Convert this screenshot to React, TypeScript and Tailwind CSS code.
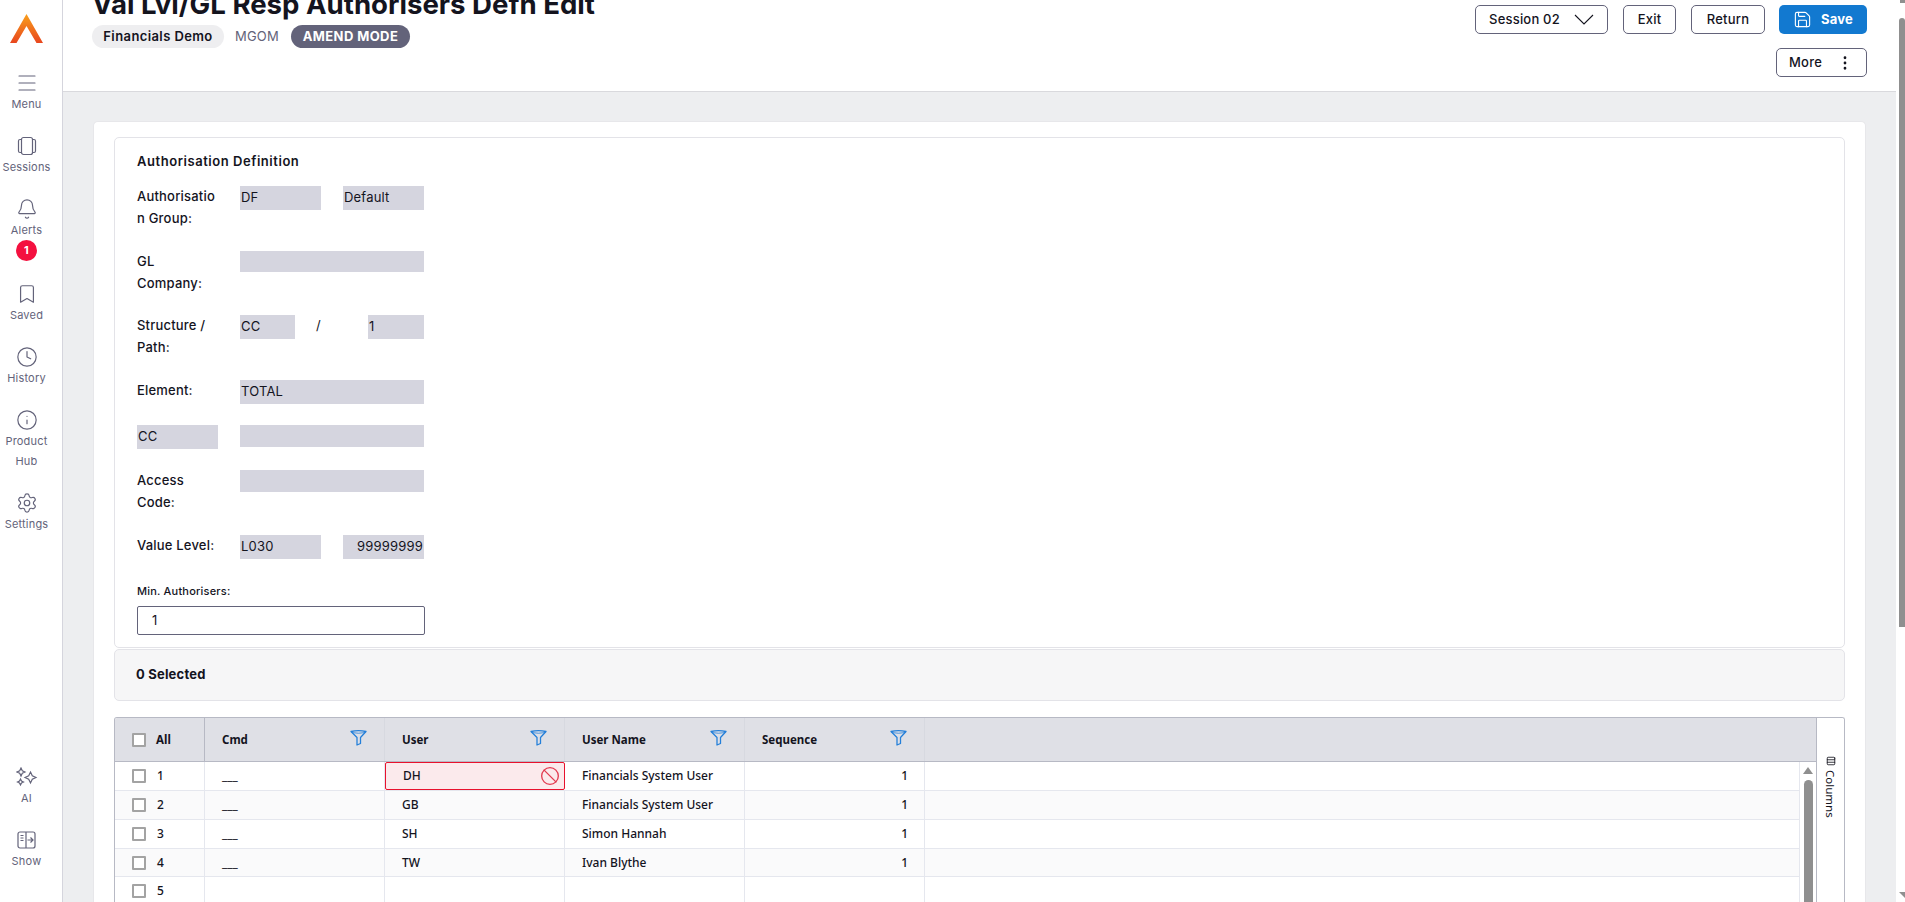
import React from "react";
import {
  Menu,
  Bell,
  Bookmark,
  Clock,
  Info,
  Settings,
  Save,
  EllipsisVertical,
  Ban,
  Columns3,
} from "lucide-react";

const montserrat = "font-['Inter','Liberation_Sans',sans-serif] tracking-[0.2px]";

function SessionsIcon() {
  return (
    <svg width="20" height="20" viewBox="0 0 20 20" fill="none" stroke="#63637a" strokeWidth="1.2">
      <rect x="4.5" y="1.5" width="11" height="17" rx="2" />
      <path d="M4.5 3.5H3a1.5 1.5 0 0 0-1.5 1.5v10A1.5 1.5 0 0 0 3 16.500h1.500M15.500 3.500H17a1.500 1.500 0 0 1 1.500 1.500v10a1.500 1.500 0 0 1-1.500 1.500h-1.500" />
    </svg>
  );
}

function SparkIcon() {
  return (
    <svg width="22" height="20" viewBox="0 0 22 20" fill="none" stroke="#63637a" strokeWidth="1.2">
      <path d="M5 1l1.3 2.7L9 5 6.300 6.300 5 9 3.700 6.300 1 5l2.700-1.300z" />
      <path d="M14.500 5l1.800 3.700L20 10.500l-3.700 1.800-1.800 3.700-1.800-3.700L9 10.500l3.700-1.800z" />
      <path d="M4.500 12l1 2 2 1-2 1-1 2-1-2-2-1 2-1z" />
    </svg>
  );
}

function ShowIcon() {
  return (
    <svg width="19" height="19" viewBox="0 0 19 19" fill="none" stroke="#63637a" strokeWidth="1.2">
      <rect x="1" y="1" width="17" height="16" rx="2" />
      <path d="M9 1v16M3.500 4.500h3M3.500 7h3M3.500 9.500h3M10.500 9h5M13.500 6.500L16 9l-2.500 2.500" />
    </svg>
  );
}

function FilterIcon() {
  return (
    <svg width="17" height="17" viewBox="0 0 17 17" fill="none" stroke="#2680d9" strokeWidth="1.3" strokeLinejoin="round" className="-mt-[5px]">
      <path d="M1 2.500Q8.500 0.800 16 2.500L10.500 8.500V14.500L7 16V8.500Z" />
      <path d="M1.500 3.500Q8.500 5 15.500 3.500" strokeWidth="0.8" />
    </svg>
  );
}

function NavItem(props: { label: string[]; icon: React.ReactNode; h: string; children?: React.ReactNode }) {
  return (
    <div className={`flex flex-col items-center ${props.h}`}>
      <div className="h-[22px] flex items-center justify-center">{props.icon}</div>
      {props.label.map((l) => (
        <span key={l} className="text-[11px] leading-[20px] text-[#63637a]">
          {l}
        </span>
      ))}
      {props.children}
    </div>
  );
}

function Sidebar() {
  const iconProps = { size: 22, color: "#63637a", strokeWidth: 1.3 };
  return (
    <aside className={`w-[63px] shrink-0 border-r border-[#d5d5dd] bg-white flex flex-col pt-[14px] pb-[29px] pr-[9px] ${montserrat}`}>
      <div className="flex justify-center h-[58px]">
        <svg width="33" height="29" viewBox="0 0 33 29">
          <defs>
            <linearGradient id="logoGrad" x1="0" y1="0" x2="0" y2="1">
              <stop offset="0" stopColor="#f9a01b" />
              <stop offset="1" stopColor="#e8461e" />
            </linearGradient>
          </defs>
          <path d="M16.500 0L33 29h-6.500L16.500 12 6.500 29H0z" fill="url(#logoGrad)" />
        </svg>
      </div>
      <NavItem label={["Menu"]} icon={<Menu {...iconProps} size={24} strokeWidth={1.1} />} h="h-[63px]" />
      <NavItem label={["Sessions"]} icon={<SessionsIcon />} h="h-[63px]" />
      <NavItem label={["Alerts"]} icon={<Bell {...iconProps} />} h="h-[85px]">
        <span className="w-[21px] h-[21px] rounded-full bg-[#f4103f] text-white text-[11px] font-bold flex items-center justify-center">
          1
        </span>
      </NavItem>
      <NavItem label={["Saved"]} icon={<Bookmark {...iconProps} />} h="h-[63px]" />
      <NavItem label={["History"]} icon={<Clock {...iconProps} />} h="h-[63px]" />
      <NavItem label={["Product", "Hub"]} icon={<Info {...iconProps} />} h="h-[83px]" />
      <NavItem label={["Settings"]} icon={<Settings {...iconProps} />} h="h-[63px]" />
      <div className="mt-auto flex flex-col">
        <NavItem label={["AI"]} icon={<SparkIcon />} h="h-[63px]" />
        <NavItem label={["Show"]} icon={<ShowIcon />} h="h-[44px]" />
      </div>
    </aside>
  );
}

function Header() {
  const btn =
    "h-[29px] border border-[#63637a] rounded-[5px] bg-white text-[13px] font-medium text-[#14141e] flex items-center justify-center";
  return (
    <header className={`h-[92px] shrink-0 border-b border-[#d9d9dd] bg-white flex justify-between pl-[29px] pr-[29px] ${montserrat}`}>
      <div>
        <h1 className="text-[27.6px] leading-[34px] font-bold text-[#14141e] -mt-[13px] tracking-normal">
          Val Lvl/GL Resp Authorisers Defn Edit
        </h1>
        <div className="flex items-center mt-[4px] h-[23px]">
          <span className="h-[23px] w-[132px] rounded-full bg-[#eeeef0] text-[13px] font-semibold tracking-[0.4px] text-[#14141e] flex items-center justify-center">
            Financials Demo
          </span>
          <span className="ml-[11px] text-[13px] text-[#63637a]">MGOM</span>
          <span className="ml-[12px] h-[23px] w-[119px] rounded-full bg-[#63637a] text-[13px] font-bold tracking-[0.4px] text-white flex items-center justify-center">
            AMEND MODE
          </span>
        </div>
      </div>
      <div className="flex flex-col items-end pt-[5px] gap-[14px]">
        <div className="flex items-center gap-[15px]">
          <div className={`${btn} w-[133px] gap-[14px]`}>
            <span>Session 02</span>
            <svg width="20" height="11" viewBox="0 0 20 11" fill="none" stroke="#14141e" strokeWidth="1.1">
              <path d="M1 1l9 9 9-9" />
            </svg>
          </div>
          <div className={`${btn} w-[53px]`}>Exit</div>
          <div className={`${btn} w-[74px]`}>Return</div>
          <div className="-ml-[1px] h-[29px] w-[88px] rounded-[5px] bg-[#1279d0] text-white text-[13px] font-bold flex items-center justify-center gap-[9px]">
            <Save size={19} strokeWidth={1.4} />
            <span>Save</span>
          </div>
        </div>
        <div className={`${btn} w-[91px] gap-[14px]`}>
          <span>More</span>
          <EllipsisVertical size={18} strokeWidth={1.7} color="#14141e" />
        </div>
      </div>
    </header>
  );
}

function Field(props: { w: string; h?: string; right?: boolean; children?: React.ReactNode }) {
  return (
    <div
      className={`${props.w} ${props.h ?? "h-[24px]"} bg-[#d5d5df] text-[13px] leading-[22px] text-[#14141e] px-[1px] ${props.right ? "text-right" : ""}`}
    >
      {props.children}
    </div>
  );
}

function Label(props: { children: React.ReactNode }) {
  return <div className="w-[81px] mr-[22px] -mt-[1px] text-[13px] leading-[22px] text-[#14141e] font-medium">{props.children}</div>;
}

function DefinitionCard() {
  return (
    <section className={`h-[511px] border border-[#e3e3e8] rounded-[5px] bg-white pl-[22px] pt-[13px] ${montserrat}`}>
      <h2 className="text-[13px] leading-[20px] font-semibold tracking-[0.55px] text-[#14141e]">Authorisation Definition</h2>
      <div className="flex mt-[15px] h-[65px]">
        <Label>Authorisatio n Group:</Label>
        <Field w="w-[81px]">DF</Field>
        <div className="ml-[22px]">
          <Field w="w-[81px]">Default</Field>
        </div>
      </div>
      <div className="flex h-[64px]">
        <Label>GL Company:</Label>
        <Field w="w-[184px]" h="h-[21px]" />
      </div>
      <div className="flex h-[65px]">
        <Label>Structure / Path:</Label>
        <Field w="w-[55px]">CC</Field>
        <span className="w-[73px] pl-[21px] text-[13px] leading-[20px] text-[#14141e]">/</span>
        <Field w="w-[56px]">1</Field>
      </div>
      <div className="flex h-[45px]">
        <Label>Element:</Label>
        <Field w="w-[184px]">TOTAL</Field>
      </div>
      <div className="flex h-[45px]">
        <div className="mr-[22px]">
          <Field w="w-[81px]">CC</Field>
        </div>
        <Field w="w-[184px]" h="h-[22px]" />
      </div>
      <div className="flex h-[65px]">
        <Label>Access Code:</Label>
        <Field w="w-[184px]" h="h-[22px]" />
      </div>
      <div className="flex h-[46px]">
        <Label>Value Level:</Label>
        <Field w="w-[81px]">L030</Field>
        <div className="ml-[22px]">
          <Field w="w-[81px]" right>
            99999999
          </Field>
        </div>
      </div>
      <div className="text-[11px] leading-[20px] font-medium text-[#14141e]">Min. Authorisers:</div>
      <div className="mt-[5px] w-[288px] h-[29px] border border-[#63637a] rounded-[2px] pl-[14px] text-[13px] leading-[27px] text-[#14141e]">
        1
      </div>
    </section>
  );
}

const rows = [
  { n: 1, cmd: "___", user: "DH", name: "Financials System User", seq: "1", h: "h-[29px]" },
  { n: 2, cmd: "___", user: "GB", name: "Financials System User", seq: "1", h: "h-[29px]" },
  { n: 3, cmd: "___", user: "SH", name: "Simon Hannah", seq: "1", h: "h-[29px]" },
  { n: 4, cmd: "___", user: "TW", name: "Ivan Blythe", seq: "1", h: "h-[28px]" },
  { n: 5, cmd: "", user: "", name: "", seq: "", h: "h-[29px]" },
];

function Checkbox() {
  return <span className="w-[14px] h-[14px] border-2 border-[#a3a3a3] rounded-[1px] bg-white shrink-0 box-border" />;
}

function HeaderCell(props: { label: string }) {
  return (
    <div className="w-[180px] shrink-0 h-full pl-[17px] pr-[17px] border-r border-[#d7d9e0] flex items-center justify-between">
      <span>{props.label}</span>
      <FilterIcon />
    </div>
  );
}

function GridTable() {
  return (
    <div className="mt-[16px] h-[190px] flex border border-[#b7b9c4] border-b-0 rounded-t-[3px] font-['Noto_Sans','Open_Sans',sans-serif] text-[12px] text-[#14141e] overflow-hidden">
      <div className="flex-1 min-w-0 flex flex-col">
        <div className="h-[44px] shrink-0 bg-[#dfe0e6] border-b border-[#b7b9c4] flex items-center font-bold text-[11.5px]">
          <div className="w-[90px] shrink-0 h-full pl-[17px] border-r border-[#b7b9c4] flex items-center gap-[10px]">
            <Checkbox />
            <span>All</span>
          </div>
          <HeaderCell label="Cmd" />
          <HeaderCell label="User" />
          <HeaderCell label="User Name" />
          <HeaderCell label="Sequence" />
        </div>
        <div className="flex-1 flex min-h-0">
          <div className="flex-1 min-w-0">
            {rows.map((r) => (
              <div
                key={r.n}
                className={`${r.h} flex border-b border-[#e5e7ee] font-medium ${r.n % 2 === 0 ? "bg-[#fafafb]" : "bg-white"}`}
              >
                <div className="w-[90px] shrink-0 pl-[17px] border-r border-[#e5e7ee] flex items-center gap-[11px]">
                  <Checkbox />
                  <span>{r.n}</span>
                </div>
                <div className="w-[180px] shrink-0 pl-[17px] border-r border-[#e5e7ee] flex items-center">{r.cmd}</div>
                {r.n === 1 ? (
                  <div className="w-[180px] shrink-0 pl-[17px] pr-[4px] bg-[#fbeaec] border border-[#e8112d] rounded-[2px] flex items-center justify-between">
                    <span>{r.user}</span>
                    <Ban size={20} strokeWidth={1.6} color="#e23b50" className="-mt-[1px]" />
                  </div>
                ) : (
                  <div className="w-[180px] shrink-0 pl-[17px] border-r border-[#e5e7ee] flex items-center">{r.user}</div>
                )}
                <div className="w-[180px] shrink-0 pl-[17px] border-r border-[#e5e7ee] flex items-center">{r.name}</div>
                <div className="w-[180px] shrink-0 pr-[16px] border-r border-[#e5e7ee] flex items-center justify-end">{r.seq}</div>
              </div>
            ))}
          </div>
          <div className="w-[17px] shrink-0 bg-white border-l border-[#e5e7ee] flex flex-col items-center pt-[5px]">
            <span className="w-0 h-0 border-x-[5px] border-x-transparent border-b-[7px] border-b-[#8f8f8f]" />
            <span className="mt-[6px] w-[9px] flex-1 rounded-t-full bg-[#8f8f8f]" />
          </div>
        </div>
      </div>
      <div className="w-[28px] shrink-0 border-l border-[#b7b9c4] bg-white flex justify-center pt-[38px]">
        <div className="[writing-mode:vertical-rl] flex items-center gap-[4px] text-[11.5px] h-fit">
          <Columns3 size={10} strokeWidth={2} color="#14141e" className="rotate-90" />
          <span>Columns</span>
        </div>
      </div>
    </div>
  );
}

function PageScrollbar() {
  return (
    <div className="w-[9px] shrink-0 bg-white flex flex-col items-end">
      <span className="w-[5px] h-[3px] bg-[#8f8f8f]" />
      <span className="mt-[15px] w-[6px] h-[609px] rounded-t-full rounded-b-[3px] bg-[#8f8f8f]" />
      <span className="mt-auto mb-[4px] w-0 h-0 border-l-[6px] border-l-transparent border-t-[6px] border-t-[#8f8f8f]" />
    </div>
  );
}

export default function App() {
  return (
    <div className="flex h-[902px] overflow-hidden bg-white">
      <Sidebar />
      <div className="flex-1 min-w-0 flex flex-col">
        <Header />
        <main className="flex-1 min-h-0 bg-[#edeef0] pl-[30px] pr-[30px] pt-[29px] overflow-hidden">
          <div className="h-full bg-white rounded-t-[5px] border border-[#e7e7ea] border-b-0 pl-[20px] pr-[20px] pt-[15px]">
            <DefinitionCard />
            <div className={`mt-[1px] h-[52px] border border-[#e3e3e8] rounded-[5px] bg-[#f6f6f7] pl-[21px] flex items-center text-[13px] font-bold text-[#14141e] ${montserrat}`}>
              0 Selected
            </div>
            <GridTable />
          </div>
        </main>
      </div>
      <PageScrollbar />
    </div>
  );
}
